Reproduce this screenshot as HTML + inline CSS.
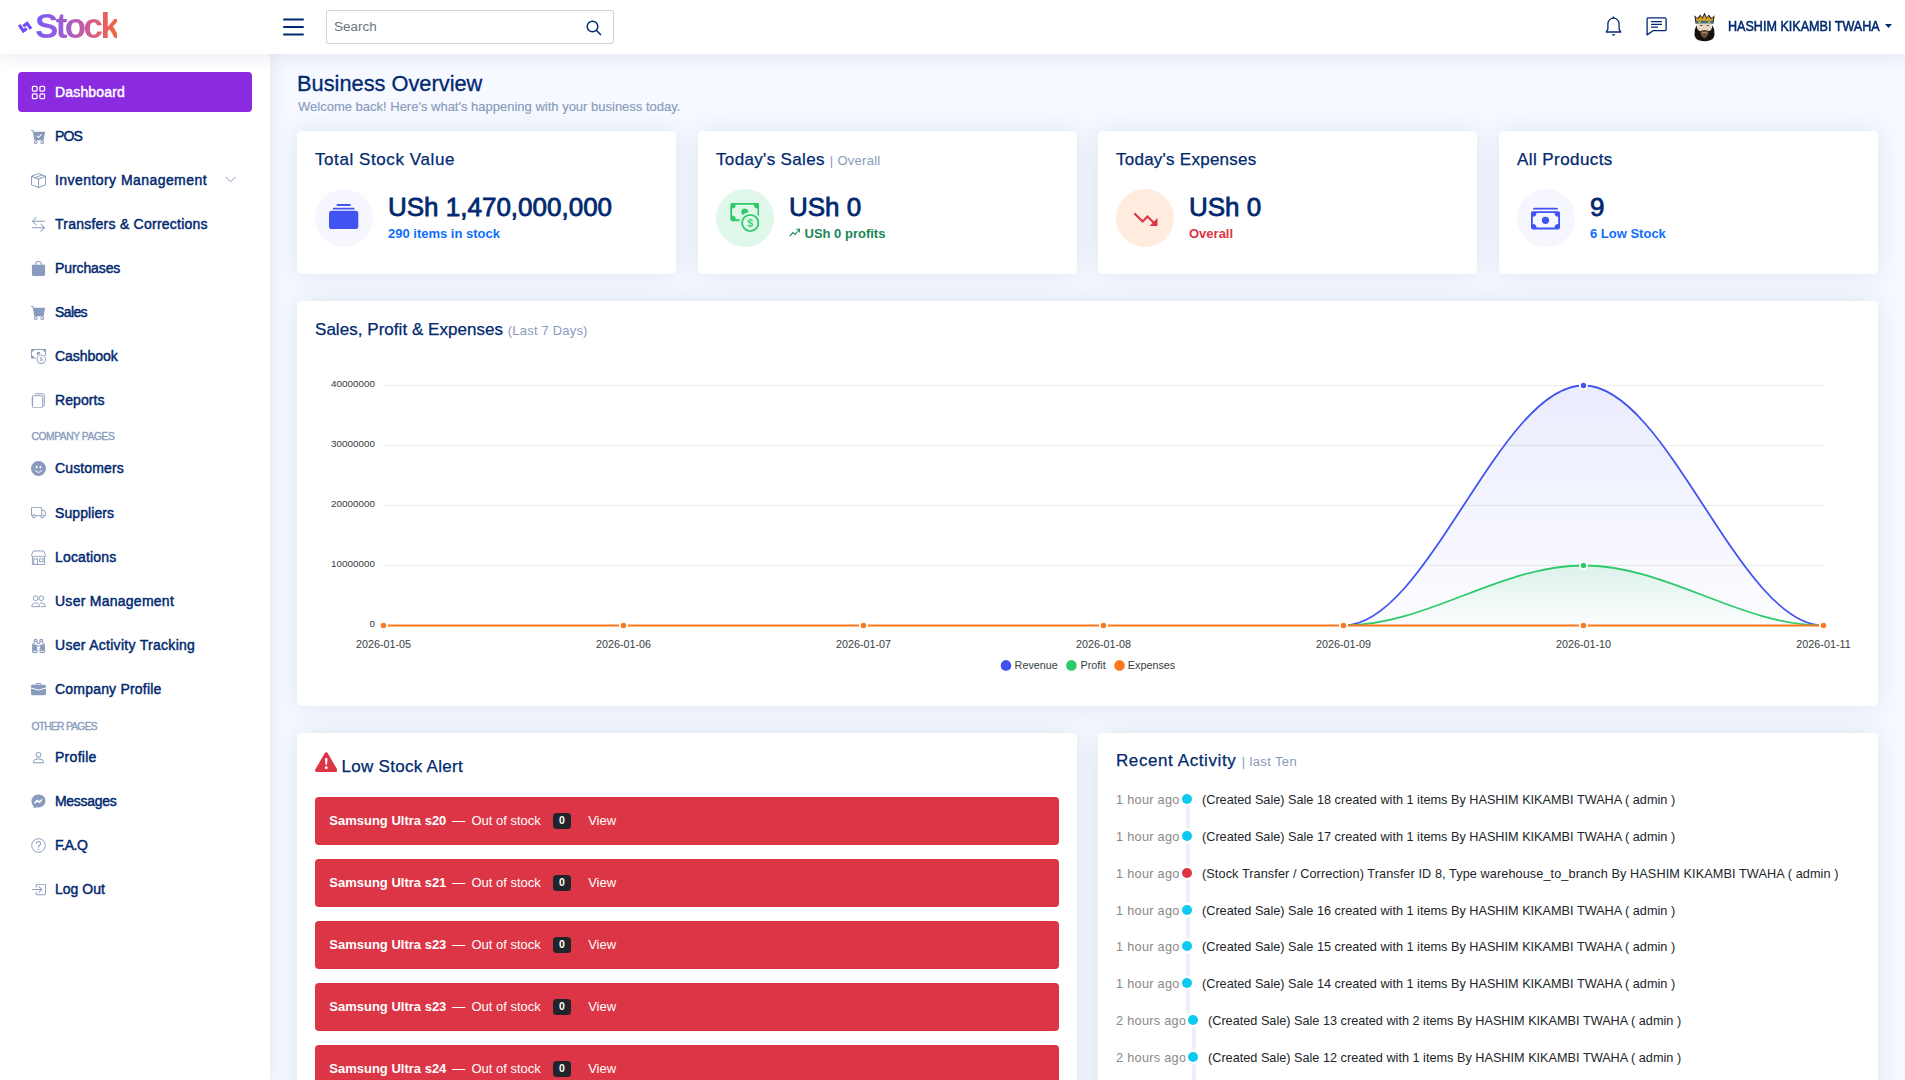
<!DOCTYPE html>
<html><head><meta charset="utf-8">
<style>
*{box-sizing:border-box;margin:0;padding:0}
html,body{width:1905px;height:1080px;overflow:hidden}
body{background:#f6f9ff;font-family:"Liberation Sans",sans-serif;color:#444;position:relative}
.abs{position:absolute}
#header{position:absolute;left:0;top:0;width:1905px;height:54px;background:#fff;box-shadow:0 2px 18px rgba(1,41,112,0.1);z-index:20}
#sidebar{position:absolute;left:0;top:54px;width:270px;height:1026px;background:#fff;box-shadow:0 0 18px rgba(1,41,112,0.1);z-index:15}
.logo{position:absolute;left:35px;top:6.4px;font-size:35px;font-weight:bold;letter-spacing:-2.6px;background:linear-gradient(90deg,#7a5cf8 0%,#a35ccd 40%,#d45f88 70%,#f2653a 100%);-webkit-background-clip:text;background-clip:text;color:transparent;line-height:40px}
.search{position:absolute;left:326px;top:10px;width:288px;height:33.5px;border:1px solid rgba(1,41,112,0.2);border-radius:3px;background:#fff}
.search span{position:absolute;left:7px;top:0;line-height:31px;font-size:13.5px;color:#6c757d}
.nav{position:absolute;left:18px;width:234px;height:40px;border-radius:4px;color:#012970;font-size:14px;font-weight:normal;-webkit-text-stroke:0.45px currentColor}
.nav.active{background:#8a2be2;color:#fff}
.nav .t{position:absolute;left:37px;top:0;line-height:40px;white-space:nowrap}
.nav svg{position:absolute;left:13px;top:12.5px;width:15px;height:15px}
.navh{position:absolute;left:31.5px;white-space:nowrap;font-size:10.3px;font-weight:normal;-webkit-text-stroke:0.35px #899bbd;letter-spacing:-0.5px;color:#899bbd;text-transform:uppercase;line-height:12px}
.card{position:absolute;background:#fff;border-radius:4.5px;box-shadow:0 0 27px rgba(1,41,112,0.1)}
.ctitle{position:absolute;left:18px;top:0;font-size:17px;letter-spacing:0.55px;color:#012970;white-space:nowrap;line-height:20px;-webkit-text-stroke:0.25px #012970}
.ctitle span{-webkit-text-stroke:0}
.ctitle span{font-size:13px;letter-spacing:0.2px;color:#899bbd}
.circ{position:absolute;left:18px;top:58px;width:58px;height:58px;border-radius:50%}
.big{position:absolute;left:90px;font-size:26px;font-weight:normal;-webkit-text-stroke:0.8px #012970;color:#012970;line-height:30px;white-space:nowrap}
.sub{position:absolute;left:90px;font-size:13px;font-weight:bold;line-height:16px;white-space:nowrap}
.alert{position:absolute;left:18px;width:744px;height:47.5px;background:#dc3545;border-radius:4px;color:#fff;font-size:13px}
.alert .ap{position:absolute;top:0;line-height:47.5px;white-space:nowrap}
.badge{position:absolute;top:16.1px;background:#212529;color:#fff;font-size:10.5px;font-weight:bold;border-radius:3.5px;width:18px;height:15.5px;line-height:15.5px;text-align:center}
.act{position:absolute;left:18px;font-size:12.7px;white-space:nowrap;line-height:16px}
.act .lab{position:absolute;left:0;top:0;color:#888;letter-spacing:0.3px}
.act .txt{position:absolute;top:0;color:#212529}
.dot{position:absolute;width:10px;height:10px;border-radius:50%}
.act .line{position:absolute;top:0;bottom:0;width:3.6px;background:#eceefe}
</style></head><body>

<div id="header">
  <svg class="abs" style="left:14px;top:14px" width="30" height="24" viewBox="14 14 30 24"><path d="M19.2 24.8L23.4 31L26.8 28.6" fill="none" stroke="#6f4cf8" stroke-width="3.1" stroke-linejoin="miter"/><path d="M23.2 26.3L27.1 23.4L31 28.9" fill="none" stroke="#6f4cf8" stroke-width="3.1" stroke-linejoin="miter"/></svg>
  <div class="logo">Stock</div>
  <svg class="abs" style="left:283px;top:18px" width="21" height="18" viewBox="0 0 21 18"><path d="M1 1.5H20M1 9H20M1 16.5H20" stroke="#012970" stroke-width="2" stroke-linecap="round"/></svg>
  <div class="search"><span>Search</span>
    <svg class="abs" style="left:259.3px;top:8.5px" width="16" height="16" viewBox="0 0 16 16"><circle cx="6.5" cy="6.5" r="5.3" fill="none" stroke="#012970" stroke-width="1.4"/><path d="M10.5 10.5L14.5 14.5" stroke="#012970" stroke-width="1.6" stroke-linecap="round"/></svg>
  </div>
  <svg class="abs" style="left:1605px;top:16px" width="17" height="21" viewBox="0 0 17 21"><path d="M8.5 2.2c-3.2 0-5.6 2.5-5.6 5.7v5.2L1.2 16h14.6l-1.7-2.9V7.9c0-3.2-2.4-5.7-5.6-5.7z" fill="none" stroke="#012970" stroke-width="1.3" stroke-linejoin="round"/><circle cx="8.5" cy="1.6" r="1" fill="#012970"/><path d="M6.6 18.3a2 2 0 0 0 3.8 0z" fill="#012970"/></svg>
  <svg class="abs" style="left:1646px;top:17px" width="21" height="19" viewBox="0 0 21 19"><path d="M2.2 0.9h16.6a1.3 1.3 0 0 1 1.3 1.3v10.2a1.3 1.3 0 0 1-1.3 1.3H7L1.1 17.9V2.2a1.3 1.3 0 0 1 1.1-1.3z" fill="none" stroke="#012970" stroke-width="1.3" stroke-linejoin="round"/><path d="M5 4.6h11M5 7.4h11M5 10.2h7" stroke="#012970" stroke-width="1.3"/></svg>
  <!-- avatar -->
  <svg class="abs" style="left:1688px;top:8px" width="34" height="38" viewBox="1688 8 34 38">
    <path d="M1695.5 23.5 L1694.3 15.2 L1697.5 18 L1700.3 14.6 L1702.2 17.5 L1704.5 12.5 L1706.8 17.5 L1708.7 14.6 L1711.5 18 L1714.7 15.2 L1713.5 23.5z" fill="#2a2418"/>
    <path d="M1696.3 21 L1695.6 17 L1698 19.3 L1700.5 16.2 L1702.5 19 L1704.5 15 L1706.5 19 L1708.5 16.2 L1711 19.3 L1713.4 17 L1712.7 21z" fill="#e0a12a"/>
    <rect x="1696" y="20.8" width="17" height="2.8" fill="#2e7088"/>
    <rect x="1698" y="21.3" width="3" height="1.6" fill="#e0a12a"/><rect x="1707.5" y="21.3" width="3" height="1.6" fill="#e0a12a"/>
    <path d="M1697.5 23.5 H1711.5 V30 Q1704.5 32 1697.5 30z" fill="#ead6bc"/>
    <rect x="1700" y="25" width="2.4" height="1" fill="#556"/><rect x="1706.6" y="25" width="2.4" height="1" fill="#556"/>
    <path d="M1696.5 25 Q1694 30 1694.5 35 Q1695.5 39.5 1699.5 40.5 Q1704.5 42 1709.5 40.5 Q1713.5 39.5 1714.5 35 Q1715 30 1712.5 25 Q1712 30.5 1709 31 Q1704.5 29.5 1700 31 Q1697 30.5 1696.5 25z" fill="#14110e"/>
    <path d="M1700 31.5 Q1704.5 29.8 1709 31.5 Q1708.5 36 1704.5 38.5 Q1700.5 36 1700 31.5z" fill="#6e4c32"/>
    <path d="M1702 33 Q1704.5 32 1707 33" fill="none" stroke="#cbb" stroke-width="0.8"/>
  </svg>
  <div class="abs" style="left:1728px;top:16px;line-height:21px;font-size:13.8px;font-weight:normal;-webkit-text-stroke:0.5px #012970;color:#012970;white-space:nowrap;transform:scaleX(0.912);transform-origin:0 0">HASHIM KIKAMBI TWAHA</div>
  <svg class="abs" style="left:1884.5px;top:23.5px" width="7" height="4" viewBox="0 0 7 4"><path d="M0 0H7L3.5 4z" fill="#012970"/></svg>
</div>

<div id="sidebar"></div>
<!--SIDE--><div id="sideitems" style="position:absolute;left:0;top:0;z-index:16">
<div class="nav active" style="top:72.0px"><svg viewBox="0 0 16 16"><rect x="1.5" y="1.5" width="5" height="5" rx="1.2" fill="none" stroke="#fff" stroke-width="1.3"/><rect x="9.5" y="1.5" width="5" height="5" rx="1.2" fill="none" stroke="#fff" stroke-width="1.3"/><rect x="1.5" y="9.5" width="5" height="5" rx="1.2" fill="none" stroke="#fff" stroke-width="1.3"/><rect x="9.5" y="9.5" width="5" height="5" rx="1.2" fill="none" stroke="#fff" stroke-width="1.3"/></svg><span class="t" style="letter-spacing:0.17px">Dashboard</span></div>
<div class="nav" style="top:116.0px"><svg viewBox="0 0 16 16"><path fill="#899bbd" d="M.5 1a.5.5 0 0 0 0 1h1.11l.401 1.607 1.498 7.985A.5.5 0 0 0 4 12h1a2 2 0 1 0 0 4 2 2 0 0 0 0-4h7a2 2 0 1 0 0 4 2 2 0 0 0 0-4h1a.5.5 0 0 0 .491-.408l1.5-8A.5.5 0 0 0 14.5 3H2.89l-.405-1.621A.5.5 0 0 0 2 1H.5zM6 14a1 1 0 1 1-2 0 1 1 0 0 1 2 0zm7 0a1 1 0 1 1-2 0 1 1 0 0 1 2 0zm-1.646-7.646-3 3a.5.5 0 0 1-.708 0l-1.5-1.5a.5.5 0 1 1 .708-.708L8 8.293l2.646-2.647a.5.5 0 0 1 .708.708z"/></svg><span class="t" style="letter-spacing:-0.90px">POS</span></div>
<div class="nav" style="top:160.0px"><svg viewBox="0 0 16 16"><path fill="#899bbd" d="M8.186 1.113a.5.5 0 0 0-.372 0L1.846 3.5l2.404.961L10.404 2l-2.218-.887zm3.564 1.426L5.596 5 8 5.961 14.154 3.5l-2.404-.961zm3.25 1.7-6.5 2.6v7.922l6.5-2.6V4.24zM7.5 14.762V6.838L1 4.239v7.923l6.5 2.6zM7.443.184a1.5 1.5 0 0 1 1.114 0l7.129 2.852A.5.5 0 0 1 16 3.5v8.662a1 1 0 0 1-.629.928l-7.185 2.874a.5.5 0 0 1-.372 0L.63 13.09a1 1 0 0 1-.63-.928V3.5a.5.5 0 0 1 .314-.464L7.443.184z"/></svg><span class="t" style="letter-spacing:0.44px">Inventory Management</span><svg style="left:207px;top:16px;width:11px;height:7px" viewBox="0 0 11 7"><path d="M0.5 0.8L5.5 5.8L10.5 0.8" fill="none" stroke="#899bbd" stroke-width="1"/></svg></div>
<div class="nav" style="top:204.0px"><svg viewBox="0 0 16 16"><path fill="#899bbd" d="M1 11.5a.5.5 0 0 0 .5.5h11.793l-3.147 3.146a.5.5 0 0 0 .708.708l4-4a.5.5 0 0 0 0-.708l-4-4a.5.5 0 0 0-.708.708L13.293 11H1.5a.5.5 0 0 0-.5.5zm14-7a.5.5 0 0 1-.5.5H2.707l3.147 3.146a.5.5 0 1 1-.708.708l-4-4a.5.5 0 0 1 0-.708l4-4a.5.5 0 1 1 .708.708L2.707 4H14.5a.5.5 0 0 1 .5.5z"/></svg><span class="t" style="letter-spacing:0.24px">Transfers &amp; Corrections</span></div>
<div class="nav" style="top:248.0px"><svg viewBox="0 0 16 16"><path fill="#899bbd" d="M8 1a2.5 2.5 0 0 1 2.5 2.5V4h-5v-.5A2.5 2.5 0 0 1 8 1zm3.5 3v-.5a3.5 3.5 0 1 0-7 0V4H1v10a2 2 0 0 0 2 2h10a2 2 0 0 0 2-2V4h-3.5z"/></svg><span class="t" style="letter-spacing:-0.10px">Purchases</span></div>
<div class="nav" style="top:292.0px"><svg viewBox="0 0 16 16"><path fill="#899bbd" d="M0 1.5A.5.5 0 0 1 .5 1H2a.5.5 0 0 1 .485.379L2.89 3H14.5a.5.5 0 0 1 .491.592l-1.5 8A.5.5 0 0 1 13 12H4a.5.5 0 0 1-.491-.408L2.01 3.607 1.61 2H.5a.5.5 0 0 1-.5-.5zM5 12a2 2 0 1 0 0 4 2 2 0 0 0 0-4zm7 0a2 2 0 1 0 0 4 2 2 0 0 0 0-4zm-7 1a1 1 0 1 1 0 2 1 1 0 0 1 0-2zm7 0a1 1 0 1 1 0 2 1 1 0 0 1 0-2z"/></svg><span class="t" style="letter-spacing:-0.60px">Sales</span></div>
<div class="nav" style="top:336.0px"><svg viewBox="0 0 16 16"><path fill="#899bbd" d="M11 15a4 4 0 1 0 0-8 4 4 0 0 0 0 8zm5-4a5 5 0 1 1-10 0 5 5 0 0 1 10 0z"/><path fill="#899bbd" d="M9.438 11.944c.047.596.518 1.06 1.363 1.116v.44h.375v-.443c.875-.061 1.386-.529 1.386-1.207 0-.618-.39-.936-1.09-1.1l-.296-.07v-1.2c.376.043.614.248.671.532h.658c-.047-.575-.54-1.024-1.329-1.073V8.5h-.375v.45c-.747.073-1.255.522-1.255 1.158 0 .562.378.92 1.007 1.066l.248.061v1.272c-.384-.058-.639-.27-.696-.563h-.668zm1.36-1.354c-.369-.085-.569-.26-.569-.522 0-.294.216-.514.572-.578v1.1h-.003zm.432.746c.449.104.655.272.655.569 0 .339-.257.571-.709.614v-1.195l.054.012z"/><path fill="#899bbd" d="M1 0a1 1 0 0 0-1 1v8a1 1 0 0 0 1 1h4.083c.058-.344.145-.678.258-1H3a2 2 0 0 0-2-2V3a2 2 0 0 0 2-2h10a2 2 0 0 0 2 2v3.528c.38.34.717.728 1 1.154V1a1 1 0 0 0-1-1H1z"/><path fill="#899bbd" d="M9.998 5.083 10 5a2 2 0 1 0-3.132 1.65 5.982 5.982 0 0 1 3.13-1.567z"/></svg><span class="t" style="letter-spacing:-0.03px">Cashbook</span></div>
<div class="nav" style="top:380.0px"><svg viewBox="0 0 16 16"><path fill="none" stroke="#899bbd" stroke-width="1" d="M4.5 0.8h8a1.7 1.7 0 0 1 1.7 1.7v10a1.7 1.7 0 0 1-1.7 1.7M3 2.8h8a1.5 1.5 0 0 1 1.5 1.5v10a1.5 1.5 0 0 1-1.5 1.5H3A1.5 1.5 0 0 1 1.5 14.3V4.3A1.5 1.5 0 0 1 3 2.8z"/><path stroke="#899bbd" stroke-width="1" d="M0.5 6h2M0.5 9h2M0.5 12h2"/></svg><span class="t" style="letter-spacing:0.09px">Reports</span></div>
<div class="navh" style="top:431.1px;letter-spacing:-0.45px">Company Pages</div>
<div class="nav" style="top:448.0px"><svg viewBox="0 0 16 16"><path fill="#899bbd" d="M8 16A8 8 0 1 0 8 0a8 8 0 0 0 0 16zM7 6.5C7 7.328 6.552 8 6 8s-1-.672-1-1.5S5.448 5 6 5s1 .672 1 1.5zM4.285 9.567a.5.5 0 0 1 .683.183A3.498 3.498 0 0 0 8 11.5a3.498 3.498 0 0 0 3.032-1.75.5.5 0 1 1 .866.5A4.498 4.498 0 0 1 8 12.5a4.498 4.498 0 0 1-3.898-2.25.5.5 0 0 1 .183-.683zM10 8c-.552 0-1-.672-1-1.5S9.448 5 10 5s1 .672 1 1.5S10.552 8 10 8z"/></svg><span class="t" style="letter-spacing:0.13px">Customers</span></div>
<div class="nav" style="top:492.5px"><svg viewBox="0 0 16 16"><path fill="#899bbd" d="M0 3.5A1.5 1.5 0 0 1 1.5 2h9A1.5 1.5 0 0 1 12 3.5V5h1.02a1.5 1.5 0 0 1 1.17.563l1.481 1.85a1.5 1.5 0 0 1 .329.938V10.5a1.5 1.5 0 0 1-1.5 1.5H14a2 2 0 1 1-4 0H5a2 2 0 1 1-3.998-.085A1.5 1.5 0 0 1 0 10.5v-7zm1.294 7.456A1.999 1.999 0 0 1 4.732 11h5.536a2.01 2.01 0 0 1 .732-.732V3.5a.5.5 0 0 0-.5-.5h-9a.5.5 0 0 0-.5.5v7a.5.5 0 0 0 .294.456zM12 10a2 2 0 0 1 1.732 1h.768a.5.5 0 0 0 .5-.5V8.35a.5.5 0 0 0-.11-.312l-1.48-1.85A.5.5 0 0 0 13.02 6H12v4zm-9 1a1 1 0 1 0 0 2 1 1 0 0 0 0-2zm9 0a1 1 0 1 0 0 2 1 1 0 0 0 0-2z"/></svg><span class="t" style="letter-spacing:0.09px">Suppliers</span></div>
<div class="nav" style="top:537.0px"><svg viewBox="0 0 16 16"><path fill="none" stroke="#899bbd" stroke-width="1" d="M2.5 1h11l2 4.5a2 2 0 0 1-3.8.6 2 2 0 0 1-3.7 0 2 2 0 0 1-3.7 0 2 2 0 0 1-3.8-.6z"/><path fill="none" stroke="#899bbd" stroke-width="1" d="M1.5 7v8.5h13V7M3 15.5v-6h4v6M9 9.5h4v3H9z"/></svg><span class="t" style="letter-spacing:0.16px">Locations</span></div>
<div class="nav" style="top:581.0px"><svg viewBox="0 0 16 16"><circle cx="5" cy="4.5" r="2.5" fill="none" stroke="#899bbd" stroke-width="1"/><circle cx="11" cy="4.5" r="2.5" fill="none" stroke="#899bbd" stroke-width="1"/><path fill="none" stroke="#899bbd" stroke-width="1" d="M0.8 13.5c0-2.5 2-4 4.2-4s4.2 1.5 4.2 4zM9.5 9.7c0.5-.1 1-.2 1.5-.2 2.2 0 4.2 1.5 4.2 4h-5"/></svg><span class="t" style="letter-spacing:0.26px">User Management</span></div>
<div class="nav" style="top:625.0px"><svg viewBox="0 0 16 16"><path fill="#899bbd" d="M3 2.5A1.5 1.5 0 0 1 4.5 1h1A1.5 1.5 0 0 1 7 2.5V5h2V2.5A1.5 1.5 0 0 1 10.5 1h1A1.5 1.5 0 0 1 13 2.5v2.382a.5.5 0 0 0 .276.447l.895.447A1.5 1.5 0 0 1 15 7.118V14.5a1.5 1.5 0 0 1-1.5 1.5h-3A1.5 1.5 0 0 1 9 14.5v-3a.5.5 0 0 1 .146-.354l.854-.853V9.5a.5.5 0 0 0-.5-.5h-3a.5.5 0 0 0-.5.5v.793l.854.853A.5.5 0 0 1 7 11.5v3A1.5 1.5 0 0 1 5.5 16h-3A1.5 1.5 0 0 1 1 14.5V7.118a1.5 1.5 0 0 1 .83-1.342l.894-.447A.5.5 0 0 0 3 4.882V2.5zM4.5 2a.5.5 0 0 0-.5.5V3h2v-.5a.5.5 0 0 0-.5-.5h-1zM6 4H4v.882a1.5 1.5 0 0 1-.83 1.342l-.894.447A.5.5 0 0 0 2 7.118V13h4v-1.293l-.854-.853A.5.5 0 0 1 5 10.5v-1A1.5 1.5 0 0 1 6.5 8h3A1.5 1.5 0 0 1 11 9.5v1a.5.5 0 0 1-.146.354l-.854.853V13h4V7.118a.5.5 0 0 0-.276-.447l-.895-.447A1.5 1.5 0 0 1 12 4.882V4h-2v1.5a.5.5 0 0 1-.5.5h-3a.5.5 0 0 1-.5-.5V4zm4-1h2v-.5a.5.5 0 0 0-.5-.5h-1a.5.5 0 0 0-.5.5V3zm4 11h-4v.5a.5.5 0 0 0 .5.5h3a.5.5 0 0 0 .5-.5V14zm-8 0H2v.5a.5.5 0 0 0 .5.5h3a.5.5 0 0 0 .5-.5V14z"/><path fill="#899bbd" d="M2 7h4v6H2zM10 7h4v6h-4z"/></svg><span class="t" style="letter-spacing:0.29px">User Activity Tracking</span></div>
<div class="nav" style="top:669.0px"><svg viewBox="0 0 16 16"><path fill="#899bbd" d="M6.5 1A1.5 1.5 0 0 0 5 2.5V3H1.5A1.5 1.5 0 0 0 0 4.5v1.384l7.614 2.03a1.5 1.5 0 0 0 .772 0L16 5.884V4.5A1.5 1.5 0 0 0 14.5 3H11v-.5A1.5 1.5 0 0 0 9.5 1h-3zm0 1h3a.5.5 0 0 1 .5.5V3H6v-.5a.5.5 0 0 1 .5-.5z"/><path fill="#899bbd" d="M0 12.5A1.5 1.5 0 0 0 1.5 14h13a1.5 1.5 0 0 0 1.5-1.5V6.85L8.129 8.947a.5.5 0 0 1-.258 0L0 6.85v5.65z"/></svg><span class="t" style="letter-spacing:0.20px">Company Profile</span></div>
<div class="navh" style="top:720.6px;letter-spacing:-0.75px">Other Pages</div>
<div class="nav" style="top:737.0px"><svg viewBox="0 0 16 16"><path fill="#899bbd" d="M8 8a3 3 0 1 0 0-6 3 3 0 0 0 0 6zm2-3a2 2 0 1 1-4 0 2 2 0 0 1 4 0zm4 8c0 1-1 1-1 1H3s-1 0-1-1 1-4 6-4 6 3 6 4zm-1-.004c-.001-.246-.154-.986-.832-1.664C11.516 10.68 10.289 10 8 10c-2.29 0-3.516.68-4.168 1.332-.678.678-.83 1.418-.832 1.664h10z"/></svg><span class="t" style="letter-spacing:0.28px">Profile</span></div>
<div class="nav" style="top:781.0px"><svg viewBox="0 0 16 16"><path fill="#899bbd" d="M8 0.5C3.8 0.5 0.5 3.6 0.5 7.6c0 2.1.9 3.9 2.3 5.2v2.7l2.5-1.4c.8.2 1.7.3 2.7.3 4.2 0 7.5-3.1 7.5-7.1S12.2.5 8 .5z"/><path fill="none" stroke="#fff" stroke-width="1.2" stroke-linejoin="round" d="M3.8 9.6 6.6 6.6 8.2 8.2 11.6 6.1 8.9 9.1 7.3 7.6z"/></svg><span class="t" style="letter-spacing:-0.31px">Messages</span></div>
<div class="nav" style="top:825.0px"><svg viewBox="0 0 16 16"><circle cx="8" cy="8" r="7.3" fill="none" stroke="#899bbd" stroke-width="1"/><path fill="none" stroke="#899bbd" stroke-width="1.1" d="M5.7 6a2.3 2.2 0 1 1 3.3 2c-.7.4-1 .8-1 1.6v.4"/><circle cx="8" cy="12" r=".7" fill="#899bbd"/></svg><span class="t" style="letter-spacing:-0.54px">F.A.Q</span></div>
<div class="nav" style="top:869.0px"><svg viewBox="0 0 16 16"><path fill="#899bbd" d="M6 3.5a.5.5 0 0 1 .5-.5h8a.5.5 0 0 1 .5.5v9a.5.5 0 0 1-.5.5h-8a.5.5 0 0 1-.5-.5v-2a.5.5 0 0 0-1 0v2A1.5 1.5 0 0 0 6.5 14h8a1.5 1.5 0 0 0 1.5-1.5v-9A1.5 1.5 0 0 0 14.5 2h-8A1.5 1.5 0 0 0 5 3.5v2a.5.5 0 0 0 1 0v-2z"/><path fill="#899bbd" d="M11.854 8.354a.5.5 0 0 0 0-.708l-3-3a.5.5 0 1 0-.708.708L10.293 7.5H1.5a.5.5 0 0 0 0 1h8.793l-2.147 2.146a.5.5 0 0 0 .708.708l3-3z"/></svg><span class="t" style="letter-spacing:0.02px">Log Out</span></div>
</div><!--/SIDE-->

<!-- main -->
<div class="abs" style="left:297px;top:70px;font-size:21.8px;color:#012970;line-height:28px;white-space:nowrap;-webkit-text-stroke:0.3px #012970">Business Overview</div>
<div class="abs" style="left:298px;top:99px;font-size:13px;color:#899bbd;line-height:16px;white-space:nowrap;-webkit-text-stroke:0.15px #899bbd">Welcome back! Here's what's happening with your business today.</div>


<!--CARDS-->
<div class="card" style="left:297px;top:131px;width:379px;height:143px">
  <div class="ctitle" style="top:18.7px;letter-spacing:0.58px">Total Stock Value</div>
  <div class="circ" style="background:#f6f6fe"></div>
  <svg class="abs" style="left:32.4px;top:72.9px" width="29.3" height="25.2" viewBox="0 0 29.3 25.2"><rect x="7.5" y="0" width="14.4" height="2" rx="1" fill="#4154f1"/><rect x="3.7" y="3.7" width="21.9" height="1.8" rx="0.9" fill="#4154f1"/><rect x="0" y="6.8" width="29.3" height="18.4" rx="2.7" fill="#4154f1"/></svg>
  <div class="big" style="top:60.6px;left:91px">USh 1,470,000,000</div>
  <div class="sub" style="top:95.2px;left:91px;color:#0d6efd">290 items in stock</div>
</div>
<div class="card" style="left:698px;top:131px;width:379px;height:143px">
  <div class="ctitle" style="top:18.7px;letter-spacing:0.34px">Today's Sales <span style="letter-spacing:0.28px">| Overall</span></div>
  <div class="circ" style="background:#e0f8e9"></div>
  <svg class="abs" style="left:31.7px;top:72px" width="29.6" height="29" viewBox="0 0 16 16"><path fill="#2eca6a" d="M11 15a4 4 0 1 0 0-8 4 4 0 0 0 0 8zm5-4a5 5 0 1 1-10 0 5 5 0 0 1 10 0z"/><path fill="#2eca6a" d="M9.438 11.944c.047.596.518 1.06 1.363 1.116v.44h.375v-.443c.875-.061 1.386-.529 1.386-1.207 0-.618-.39-.936-1.09-1.1l-.296-.07v-1.2c.376.043.614.248.671.532h.658c-.047-.575-.54-1.024-1.329-1.073V8.5h-.375v.45c-.747.073-1.255.522-1.255 1.158 0 .562.378.92 1.007 1.066l.248.061v1.272c-.384-.058-.639-.27-.696-.563h-.668zm1.36-1.354c-.369-.085-.569-.26-.569-.522 0-.294.216-.514.572-.578v1.1h-.003zm.432.746c.449.104.655.272.655.569 0 .339-.257.571-.709.614v-1.195l.054.012z"/><path fill="#2eca6a" d="M1 0a1 1 0 0 0-1 1v8a1 1 0 0 0 1 1h4.083c.058-.344.145-.678.258-1H3a2 2 0 0 0-2-2V3a2 2 0 0 0 2-2h10a2 2 0 0 0 2 2v3.528c.38.34.717.728 1 1.154V1a1 1 0 0 0-1-1H1z"/><path fill="#2eca6a" d="M9.998 5.083 10 5a2 2 0 1 0-3.132 1.65 5.982 5.982 0 0 1 3.13-1.567z"/></svg>
  <div class="big" style="top:60.6px;left:91px">USh 0</div>
  <svg class="abs" style="left:91px;top:97px" width="11" height="9" viewBox="0 0 11 9"><path d="M0.6 8.2L4 4.6L6 6.4L10 2" fill="none" stroke="#198754" stroke-width="1.1"/><path d="M7.2 1.2H10.6V4.6" fill="none" stroke="#198754" stroke-width="1.1"/></svg>
  <div class="sub" style="top:95.2px;left:106.5px;color:#198754">USh 0 profits</div>
</div>
<div class="card" style="left:1098px;top:131px;width:379px;height:143px">
  <div class="ctitle" style="top:18.7px;letter-spacing:0.25px">Today's Expenses</div>
  <div class="circ" style="background:#ffecdf"></div>
  <svg class="abs" style="left:34px;top:79px" width="26" height="17" viewBox="0 0 26 17"><path d="M2.3 3.2L10.6 11.5L15.5 6.6L21.5 12.6" fill="none" stroke="#dc3545" stroke-width="2.1" stroke-linejoin="miter"/><path d="M17.5 16H25.5V8z" fill="#dc3545"/></svg>
  <div class="big" style="top:60.6px;left:91px">USh 0</div>
  <div class="sub" style="top:95.2px;left:91px;color:#dc3545">Overall</div>
</div>
<div class="card" style="left:1499px;top:131px;width:379px;height:143px">
  <div class="ctitle" style="top:18.7px;letter-spacing:0.42px">All Products</div>
  <div class="circ" style="background:#f6f6fe"></div>
  <svg class="abs" style="left:32px;top:72.5px" width="29" height="29" viewBox="0 0 16 16"><path fill="#4154f1" d="M1 3a1 1 0 0 1 1-1h12a1 1 0 0 1 1 1H1zm7 8a2 2 0 1 0 0-4 2 2 0 0 0 0 4z"/><path fill="#4154f1" d="M0 5a1 1 0 0 1 1-1h14a1 1 0 0 1 1 1v8a1 1 0 0 1-1 1H1a1 1 0 0 1-1-1V5zm3 0a2 2 0 0 1-2 2v4a2 2 0 0 1 2 2h10a2 2 0 0 1 2-2V7a2 2 0 0 1-2-2H3z"/></svg>
  <div class="big" style="top:60.6px;left:91px">9</div>
  <div class="sub" style="top:95.2px;left:91px;color:#0d6efd">6 Low Stock</div>
</div>
<!--/CARDS-->

<!--MAIN2-->
<div class="card" style="left:297px;top:301px;width:1581px;height:405px">
  <div class="ctitle" style="top:18.5px;letter-spacing:0.04px">Sales, Profit &amp; Expenses <span style="letter-spacing:0.19px">(Last 7 Days)</span></div>
  <svg class="abs" style="left:0;top:0" width="1581" height="405" viewBox="297 301 1581 405">
<defs><linearGradient id="gr" x1="0" y1="0" x2="0" y2="1"><stop offset="0" stop-color="#4154f1" stop-opacity="0.11"/><stop offset="1" stop-color="#4154f1" stop-opacity="0.015"/></linearGradient><linearGradient id="gp" x1="0" y1="0" x2="0" y2="1"><stop offset="0" stop-color="#2eca6a" stop-opacity="0.13"/><stop offset="1" stop-color="#2eca6a" stop-opacity="0.0"/></linearGradient></defs>
<line x1="383.5" y1="385.5" x2="1823.5" y2="385.5" stroke="#ebebeb" stroke-width="1"/>
<text x="375" y="386.9" text-anchor="end" font-size="9.9" fill="#373d3f" font-family="Liberation Sans">40000000</text>
<line x1="383.5" y1="445.5" x2="1823.5" y2="445.5" stroke="#ebebeb" stroke-width="1"/>
<text x="375" y="446.9" text-anchor="end" font-size="9.9" fill="#373d3f" font-family="Liberation Sans">30000000</text>
<line x1="383.5" y1="505.5" x2="1823.5" y2="505.5" stroke="#ebebeb" stroke-width="1"/>
<text x="375" y="506.9" text-anchor="end" font-size="9.9" fill="#373d3f" font-family="Liberation Sans">20000000</text>
<line x1="383.5" y1="565.5" x2="1823.5" y2="565.5" stroke="#ebebeb" stroke-width="1"/>
<text x="375" y="566.9" text-anchor="end" font-size="9.9" fill="#373d3f" font-family="Liberation Sans">10000000</text>
<line x1="383.5" y1="625.5" x2="1823.5" y2="625.5" stroke="#ebebeb" stroke-width="1"/>
<text x="375" y="626.9" text-anchor="end" font-size="9.9" fill="#373d3f" font-family="Liberation Sans">0</text>
<line x1="383.5" y1="626" x2="383.5" y2="632" stroke="#e8e8e8" stroke-width="1"/>
<text x="383.5" y="648" text-anchor="middle" font-size="10.8" fill="#373d3f" font-family="Liberation Sans">2026-01-05</text>
<line x1="623.5" y1="626" x2="623.5" y2="632" stroke="#e8e8e8" stroke-width="1"/>
<text x="623.5" y="648" text-anchor="middle" font-size="10.8" fill="#373d3f" font-family="Liberation Sans">2026-01-06</text>
<line x1="863.5" y1="626" x2="863.5" y2="632" stroke="#e8e8e8" stroke-width="1"/>
<text x="863.5" y="648" text-anchor="middle" font-size="10.8" fill="#373d3f" font-family="Liberation Sans">2026-01-07</text>
<line x1="1103.5" y1="626" x2="1103.5" y2="632" stroke="#e8e8e8" stroke-width="1"/>
<text x="1103.5" y="648" text-anchor="middle" font-size="10.8" fill="#373d3f" font-family="Liberation Sans">2026-01-08</text>
<line x1="1343.5" y1="626" x2="1343.5" y2="632" stroke="#e8e8e8" stroke-width="1"/>
<text x="1343.5" y="648" text-anchor="middle" font-size="10.8" fill="#373d3f" font-family="Liberation Sans">2026-01-09</text>
<line x1="1583.5" y1="626" x2="1583.5" y2="632" stroke="#e8e8e8" stroke-width="1"/>
<text x="1583.5" y="648" text-anchor="middle" font-size="10.8" fill="#373d3f" font-family="Liberation Sans">2026-01-10</text>
<line x1="1823.5" y1="626" x2="1823.5" y2="632" stroke="#e8e8e8" stroke-width="1"/>
<text x="1823.5" y="648" text-anchor="middle" font-size="10.8" fill="#373d3f" font-family="Liberation Sans">2026-01-11</text>
<path d="M383.50 625.50 C467.50 625.50 539.50 625.50 623.50 625.50 C707.50 625.50 779.50 625.50 863.50 625.50 C947.50 625.50 1019.50 625.50 1103.50 625.50 C1187.50 625.50 1259.50 625.50 1343.50 625.50 C1427.50 625.50 1499.50 385.50 1583.50 385.50 C1667.50 385.50 1739.50 625.50 1823.50 625.50 L1823.5 625.5 L383.5 625.5z" fill="url(#gr)"/>
<path d="M383.50 625.50 C467.50 625.50 539.50 625.50 623.50 625.50 C707.50 625.50 779.50 625.50 863.50 625.50 C947.50 625.50 1019.50 625.50 1103.50 625.50 C1187.50 625.50 1259.50 625.50 1343.50 625.50 C1427.50 625.50 1499.50 565.50 1583.50 565.50 C1667.50 565.50 1739.50 625.50 1823.50 625.50 L1823.5 625.5 L383.5 625.5z" fill="url(#gp)"/>
<path d="M1343.5 625.5 C1427.50 625.50 1499.50 385.50 1583.50 385.50 C1667.50 385.50 1739.50 625.50 1823.50 625.50" fill="none" stroke="#4154f1" stroke-width="1.8"/>
<path d="M1343.5 625.5 C1427.50 625.50 1499.50 565.50 1583.50 565.50 C1667.50 565.50 1739.50 625.50 1823.50 625.50" fill="none" stroke="#2eca6a" stroke-width="1.8"/>
<path d="M383.50 625.50 C467.50 625.50 539.50 625.50 623.50 625.50 C707.50 625.50 779.50 625.50 863.50 625.50 C947.50 625.50 1019.50 625.50 1103.50 625.50 C1187.50 625.50 1259.50 625.50 1343.50 625.50 C1427.50 625.50 1499.50 625.50 1583.50 625.50 C1667.50 625.50 1739.50 625.50 1823.50 625.50" fill="none" stroke="#ff771d" stroke-width="1.8"/>
<circle cx="383.5" cy="625.5" r="3.6" fill="#4154f1" stroke="#fff" stroke-width="1.8"/>
<circle cx="623.5" cy="625.5" r="3.6" fill="#4154f1" stroke="#fff" stroke-width="1.8"/>
<circle cx="863.5" cy="625.5" r="3.6" fill="#4154f1" stroke="#fff" stroke-width="1.8"/>
<circle cx="1103.5" cy="625.5" r="3.6" fill="#4154f1" stroke="#fff" stroke-width="1.8"/>
<circle cx="1343.5" cy="625.5" r="3.6" fill="#4154f1" stroke="#fff" stroke-width="1.8"/>
<circle cx="1583.5" cy="385.5" r="3.6" fill="#4154f1" stroke="#fff" stroke-width="1.8"/>
<circle cx="1823.5" cy="625.5" r="3.6" fill="#4154f1" stroke="#fff" stroke-width="1.8"/>
<circle cx="383.5" cy="625.5" r="3.6" fill="#2eca6a" stroke="#fff" stroke-width="1.8"/>
<circle cx="623.5" cy="625.5" r="3.6" fill="#2eca6a" stroke="#fff" stroke-width="1.8"/>
<circle cx="863.5" cy="625.5" r="3.6" fill="#2eca6a" stroke="#fff" stroke-width="1.8"/>
<circle cx="1103.5" cy="625.5" r="3.6" fill="#2eca6a" stroke="#fff" stroke-width="1.8"/>
<circle cx="1343.5" cy="625.5" r="3.6" fill="#2eca6a" stroke="#fff" stroke-width="1.8"/>
<circle cx="1583.5" cy="565.5" r="3.6" fill="#2eca6a" stroke="#fff" stroke-width="1.8"/>
<circle cx="1823.5" cy="625.5" r="3.6" fill="#2eca6a" stroke="#fff" stroke-width="1.8"/>
<circle cx="383.5" cy="625.5" r="3.6" fill="#ff771d" stroke="#fff" stroke-width="1.8"/>
<circle cx="623.5" cy="625.5" r="3.6" fill="#ff771d" stroke="#fff" stroke-width="1.8"/>
<circle cx="863.5" cy="625.5" r="3.6" fill="#ff771d" stroke="#fff" stroke-width="1.8"/>
<circle cx="1103.5" cy="625.5" r="3.6" fill="#ff771d" stroke="#fff" stroke-width="1.8"/>
<circle cx="1343.5" cy="625.5" r="3.6" fill="#ff771d" stroke="#fff" stroke-width="1.8"/>
<circle cx="1583.5" cy="625.5" r="3.6" fill="#ff771d" stroke="#fff" stroke-width="1.8"/>
<circle cx="1823.5" cy="625.5" r="3.6" fill="#ff771d" stroke="#fff" stroke-width="1.8"/>
<circle cx="1006.0" cy="665.4" r="5.3" fill="#4154f1"/>
<text x="1014.6" y="668.8" font-size="10.8" fill="#373d3f" font-family="Liberation Sans">Revenue</text>
<circle cx="1071.4" cy="665.4" r="5.3" fill="#2eca6a"/>
<text x="1080.5" y="668.8" font-size="10.8" fill="#373d3f" font-family="Liberation Sans">Profit</text>
<circle cx="1119.5" cy="665.4" r="5.3" fill="#ff771d"/>
<text x="1127.8" y="668.8" font-size="10.8" fill="#373d3f" font-family="Liberation Sans">Expenses</text>
</svg>
</div>
<div class="card" style="left:297px;top:733px;width:780px;height:400px">
  <svg class="abs" style="left:17.8px;top:19px" width="22.5" height="20" viewBox="0 0 16 14.2"><path fill="#dc3545" d="M8.982 1.566a1.13 1.13 0 0 0-1.96 0L.165 13.233c-.457.778.091 1.767.98 1.767h13.713c.889 0 1.438-.99.98-1.767L8.982 1.566zM8 5c.535 0 .954.462.9.995l-.35 3.507a.552.552 0 0 1-1.1 0L7.1 5.995A.905.905 0 0 1 8 5zm.002 6a1 1 0 1 1 0 2 1 1 0 0 1 0-2z" transform="translate(0,-0.8)"/></svg>
  <div class="ctitle" style="left:44.4px;top:23.5px;letter-spacing:0.3px">Low Stock Alert</div>
  <div class="alert" style="top:64.10px"><b class="ap" style="left:14.3px">Samsung Ultra s20</b><span class="ap" style="left:137.2px">—</span><span class="ap" style="left:156.4px">Out of stock</span><span class="badge" style="left:238px">0</span><span class="ap" style="left:273.2px">View</span></div>
<div class="alert" style="top:126.15px"><b class="ap" style="left:14.3px">Samsung Ultra s21</b><span class="ap" style="left:137.2px">—</span><span class="ap" style="left:156.4px">Out of stock</span><span class="badge" style="left:238px">0</span><span class="ap" style="left:273.2px">View</span></div>
<div class="alert" style="top:188.20px"><b class="ap" style="left:14.3px">Samsung Ultra s23</b><span class="ap" style="left:137.2px">—</span><span class="ap" style="left:156.4px">Out of stock</span><span class="badge" style="left:238px">0</span><span class="ap" style="left:273.2px">View</span></div>
<div class="alert" style="top:250.25px"><b class="ap" style="left:14.3px">Samsung Ultra s23</b><span class="ap" style="left:137.2px">—</span><span class="ap" style="left:156.4px">Out of stock</span><span class="badge" style="left:238px">0</span><span class="ap" style="left:273.2px">View</span></div>
<div class="alert" style="top:312.30px"><b class="ap" style="left:14.3px">Samsung Ultra s24</b><span class="ap" style="left:137.2px">—</span><span class="ap" style="left:156.4px">Out of stock</span><span class="badge" style="left:238px">0</span><span class="ap" style="left:273.2px">View</span></div>
</div>
<div class="card" style="left:1098px;top:733px;width:780px;height:400px;overflow:hidden">
  <div class="ctitle" style="top:18.4px;letter-spacing:0.59px">Recent Activity <span style="letter-spacing:0.38px">| last Ten</span></div>
  <div class="act" style="top:59.00px;height:36.86px"><span class="line" style="left:70.0px;top:10px"></span><span class="lab">1 hour ago</span><span class="dot" style="left:65.5px;top:2.0px;background:#0dcaf0;box-shadow:0 0 0 2.7px #fff"></span><span class="txt" style="left:86.0px">(Created Sale) Sale 18 created with 1 items By HASHIM KIKAMBI TWAHA ( admin )</span></div>
<div class="act" style="top:95.86px;height:36.86px"><span class="line" style="left:70.0px"></span><span class="lab">1 hour ago</span><span class="dot" style="left:65.5px;top:2.0px;background:#0dcaf0;box-shadow:0 0 0 2.7px #fff"></span><span class="txt" style="left:86.0px">(Created Sale) Sale 17 created with 1 items By HASHIM KIKAMBI TWAHA ( admin )</span></div>
<div class="act" style="top:132.72px;height:36.86px"><span class="line" style="left:70.0px"></span><span class="lab">1 hour ago</span><span class="dot" style="left:65.5px;top:2.0px;background:#dc3545;box-shadow:0 0 0 2.7px #fff"></span><span class="txt" style="left:86.0px;letter-spacing:0.09px">(Stock Transfer / Correction) Transfer ID 8, Type warehouse_to_branch By HASHIM KIKAMBI TWAHA ( admin )</span></div>
<div class="act" style="top:169.58px;height:36.86px"><span class="line" style="left:70.0px"></span><span class="lab">1 hour ago</span><span class="dot" style="left:65.5px;top:2.0px;background:#0dcaf0;box-shadow:0 0 0 2.7px #fff"></span><span class="txt" style="left:86.0px">(Created Sale) Sale 16 created with 1 items By HASHIM KIKAMBI TWAHA ( admin )</span></div>
<div class="act" style="top:206.44px;height:36.86px"><span class="line" style="left:70.0px"></span><span class="lab">1 hour ago</span><span class="dot" style="left:65.5px;top:2.0px;background:#0dcaf0;box-shadow:0 0 0 2.7px #fff"></span><span class="txt" style="left:86.0px">(Created Sale) Sale 15 created with 1 items By HASHIM KIKAMBI TWAHA ( admin )</span></div>
<div class="act" style="top:243.30px;height:36.86px"><span class="line" style="left:70.0px"></span><span class="lab">1 hour ago</span><span class="dot" style="left:65.5px;top:2.0px;background:#0dcaf0;box-shadow:0 0 0 2.7px #fff"></span><span class="txt" style="left:86.0px">(Created Sale) Sale 14 created with 1 items By HASHIM KIKAMBI TWAHA ( admin )</span></div>
<div class="act" style="top:280.16px;height:36.86px"><span class="line" style="left:76.0px"></span><span class="lab">2 hours ago</span><span class="dot" style="left:71.5px;top:2.0px;background:#0dcaf0;box-shadow:0 0 0 2.7px #fff"></span><span class="txt" style="left:92.0px">(Created Sale) Sale 13 created with 2 items By HASHIM KIKAMBI TWAHA ( admin )</span></div>
<div class="act" style="top:317.02px;height:36.86px"><span class="line" style="left:76.0px"></span><span class="lab">2 hours ago</span><span class="dot" style="left:71.5px;top:2.0px;background:#0dcaf0;box-shadow:0 0 0 2.7px #fff"></span><span class="txt" style="left:92.0px">(Created Sale) Sale 12 created with 1 items By HASHIM KIKAMBI TWAHA ( admin )</span></div>
<div class="act" style="top:353.88px;height:36.86px"><span class="line" style="left:76.0px"></span><span class="lab">2 hours ago</span><span class="dot" style="left:71.5px;top:2.0px;background:#0dcaf0;box-shadow:0 0 0 2.7px #fff"></span><span class="txt" style="left:92.0px">(Created Sale) Sale 11 created with 1 items By HASHIM KIKAMBI TWAHA ( admin )</span></div>
</div>
<!--/MAIN2-->
</body></html>
